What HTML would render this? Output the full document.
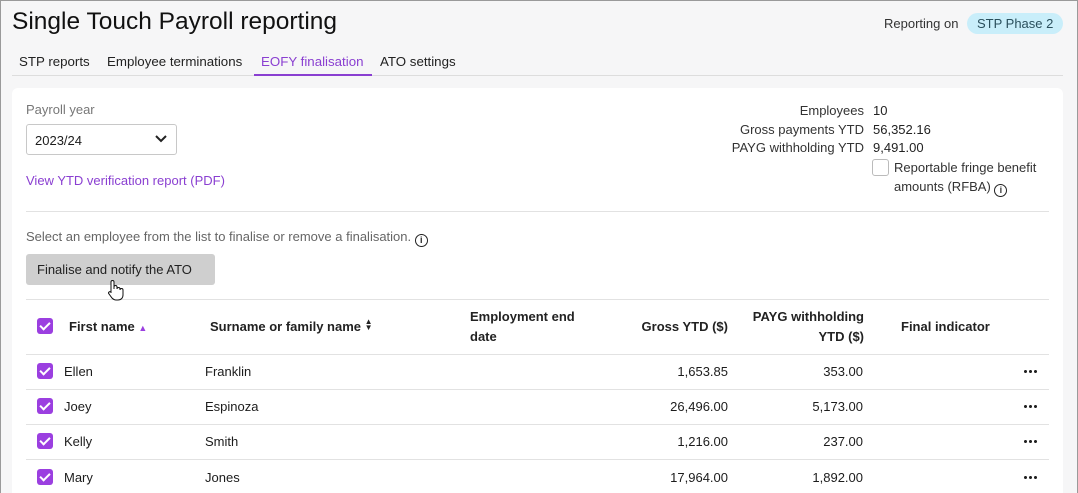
<!DOCTYPE html>
<html><head><style>
*{box-sizing:border-box;margin:0;padding:0}
html,body{width:1078px;height:493px;overflow:hidden}
body{background:#f6f6f7;font-family:"Liberation Sans",sans-serif;color:#1c1c1c;position:relative}
.frame{position:absolute;left:0;top:0;width:1078px;height:493px;border:1px solid #9a9a9a;border-bottom:none;pointer-events:none;z-index:5}
.a{position:absolute;white-space:nowrap}
h1{position:absolute;left:12px;top:8px;font-size:24.5px;font-weight:400;color:#111}
.tab{position:absolute;top:54px;font-size:13.3px;color:#222}
.card{position:absolute;left:12px;top:88px;width:1051px;height:420px;background:#fff;border-radius:6px}
.cb{position:absolute;width:16px;height:16px;border-radius:3px;background:#9b3fe0}
.cb:after{content:"";position:absolute;left:5px;top:2px;width:4px;height:8px;border:solid #fff;border-width:0 2px 2px 0;transform:rotate(45deg)}
.t{font-size:13px}
.hl{position:absolute;left:26px;width:1023px;height:1px;background:#e2e2e2}
.th{font-size:13px;font-weight:700;color:#222}
.r{text-align:right}
.info{display:inline-block;width:13px;height:13px;border:1.5px solid #222;border-radius:50%;font-size:9px;font-weight:700;text-align:center;line-height:10px;vertical-align:-2px}
.dots{position:absolute;left:1023px;width:14px;height:3px;background:radial-gradient(circle,#222 1.4px,transparent 1.6px) 0 0/5px 3px repeat-x}
</style></head><body>
<div class="frame"></div>
<h1>Single Touch Payroll reporting</h1>
<div class="a t" style="left:884px;top:16px;color:#333">Reporting on</div>
<div class="a t" style="left:967px;top:13px;background:#c9eefa;border-radius:11px;padding:2px 10px;color:#2a4f5c;height:21px;line-height:17px">STP Phase 2</div>
<div class="tab" style="left:19px">STP reports</div>
<div class="tab" style="left:107px">Employee terminations</div>
<div class="tab" style="left:261px;color:#8a3fd1">EOFY finalisation</div>
<div class="tab" style="left:380px">ATO settings</div>
<div class="a" style="left:12px;top:75px;width:1051px;height:1px;background:#ddd"></div>
<div class="a" style="left:254px;top:74px;width:118px;height:2px;background:#8a3fd1"></div>
<div class="card"></div>
<div class="a t" style="left:26px;top:102px;color:#777">Payroll year</div>
<div class="a" style="left:26px;top:124px;width:151px;height:31px;border:1px solid #c8c8c8;border-radius:3px"></div>
<div class="a t" style="left:35px;top:133px">2023/24</div>
<svg class="a" style="left:155px;top:135px" width="12" height="8"><path d="M1 1l5 5 5-5" fill="none" stroke="#222" stroke-width="2"/></svg>
<div class="a t" style="left:26px;top:173px;color:#8a3fd1">View YTD verification report (PDF)</div>
<div class="a t r" style="right:214px;top:102px;line-height:18.5px;color:#333">Employees<br>Gross payments YTD<br>PAYG withholding YTD</div>
<div class="a t" style="left:873px;top:102px;line-height:18.5px;color:#222">10<br>56,352.16<br>9,491.00</div>
<div class="a" style="left:872px;top:159px;width:17px;height:17px;border:1px solid #bbb;border-radius:3px"></div>
<div class="a t" style="left:894px;top:158px;line-height:19px;color:#333">Reportable fringe benefit<br>amounts (RFBA) <span class="info">i</span></div>
<div class="hl" style="top:211px"></div>
<div class="a t" style="left:26px;top:229px;color:#666">Select an employee from the list to finalise or remove a finalisation. <span class="info" style="color:#222">i</span></div>
<div class="a t" style="left:26px;top:254px;width:189px;height:31px;background:#cfcfcf;border-radius:3px;line-height:31px;padding-left:11px;color:#222">Finalise and notify the ATO</div>
<div class="hl" style="top:299px"></div>
<div class="cb" style="left:37px;top:318px"></div>
<div class="a th" style="left:69px;top:319px">First name <span style="color:#9b3fe0;font-size:9px">▲</span></div>
<div class="a th" style="left:210px;top:319px">Surname or family name <span style="font-size:8px;line-height:6px;display:inline-block;vertical-align:1px">▲<br>▼</span></div>
<div class="a th" style="left:470px;top:307px;line-height:20px">Employment end<br>date</div>
<div class="a th r" style="right:350px;top:319px">Gross YTD ($)</div>
<div class="a th r" style="right:214px;top:307px;line-height:20px">PAYG withholding<br>YTD ($)</div>
<div class="a th" style="left:901px;top:319px">Final indicator</div>
<div class="hl" style="top:354px"></div>
<div class="hl" style="top:389px"></div>
<div class="hl" style="top:424px"></div>
<div class="hl" style="top:459px"></div>
<div class="cb" style="left:37px;top:363px"></div><div class="a t" style="left:64px;top:364px">Ellen</div><div class="a t" style="left:205px;top:364px">Franklin</div><div class="a t r" style="right:350px;top:364px">1,653.85</div><div class="a t r" style="right:215px;top:364px">353.00</div><div class="dots" style="top:370px"></div>
<div class="cb" style="left:37px;top:398px"></div><div class="a t" style="left:64px;top:399px">Joey</div><div class="a t" style="left:205px;top:399px">Espinoza</div><div class="a t r" style="right:350px;top:399px">26,496.00</div><div class="a t r" style="right:215px;top:399px">5,173.00</div><div class="dots" style="top:405px"></div>
<div class="cb" style="left:37px;top:433px"></div><div class="a t" style="left:64px;top:434px">Kelly</div><div class="a t" style="left:205px;top:434px">Smith</div><div class="a t r" style="right:350px;top:434px">1,216.00</div><div class="a t r" style="right:215px;top:434px">237.00</div><div class="dots" style="top:440px"></div>
<div class="cb" style="left:37px;top:469px"></div><div class="a t" style="left:64px;top:470px">Mary</div><div class="a t" style="left:205px;top:470px">Jones</div><div class="a t r" style="right:350px;top:470px">17,964.00</div><div class="a t r" style="right:215px;top:470px">1,892.00</div><div class="dots" style="top:476px"></div>
<svg class="a" style="left:105px;top:279px" width="20" height="22"><path d="M6 14V3a1.5 1.5 0 013 0v7V8a1.5 1.5 0 013 0v2a1.5 1.5 0 013 0v1a1.5 1.5 0 013 0v5c0 3-2 5-5 5h-2c-2 0-3-1-4-2l-3-4a1.4 1.4 0 012-2z" fill="#fff" stroke="#111" stroke-width="1"/></svg>
</body></html>
